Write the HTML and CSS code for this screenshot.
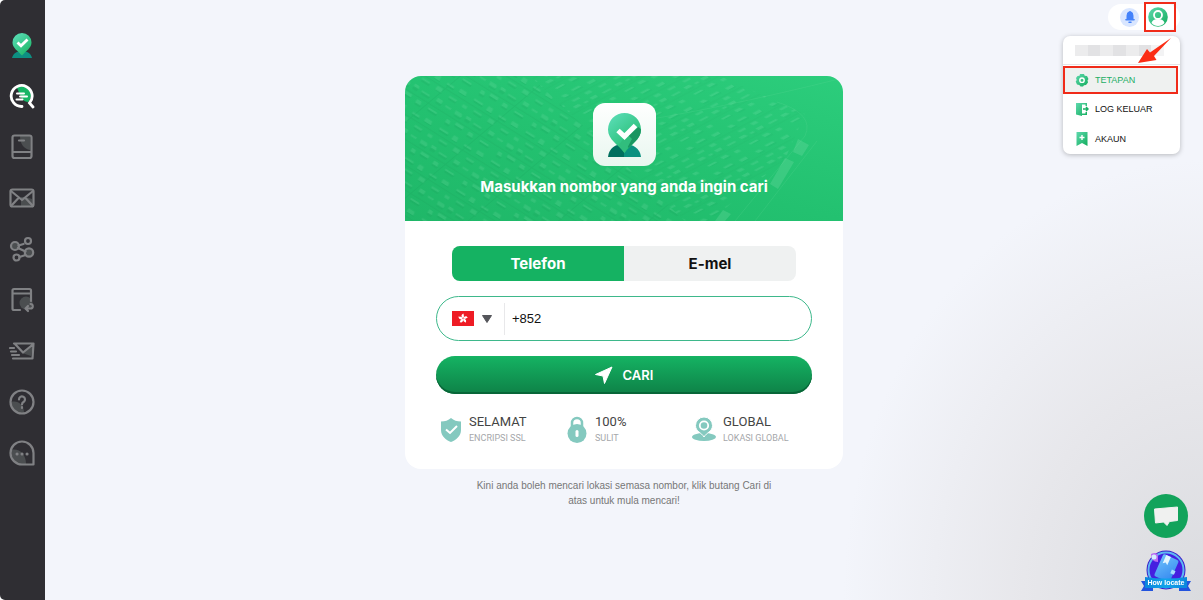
FILE: index.html
```html
<!DOCTYPE html>
<html lang="ms">
<head>
<meta charset="utf-8">
<meta name="viewport" content="width=device-width, initial-scale=1">
<title>Cari nombor</title>
<link rel="stylesheet" href="styles.css">
</head>
<body>
<svg class="defs" width="0" height="0" aria-hidden="true">
  <defs>
    <linearGradient id="pin" x1="0" y1="0" x2="0.7" y2="1"><stop offset="0" stop-color="#5fe0bc"/><stop offset="1" stop-color="#1fb86a"/></linearGradient>
    <linearGradient id="mint" x1="0" y1="0" x2="1" y2="1"><stop offset="0" stop-color="#5fd9ae"/><stop offset="1" stop-color="#12ad5c"/></linearGradient>
  </defs>
</svg>
<div class="app">
  <nav class="sidebar" aria-label="Menu utama">
    <a class="nav-item" href="#" aria-label="Laman utama"><svg width="26" height="28" viewBox="0 0 26 28"><path d="M3 27c1-4 4-7 10-7s9 3 10 7z" fill="#0d8f82"/><path d="M13 2a9.500 9.500 0 0 0-9.500 9.500C3.500 17 9 20 13 24.500c4-4.500 9.500-7.500 9.500-13A9.500 9.500 0 0 0 13 2z" fill="url(#pin)"/><path d="M8.500 11.500l3.500 3.300 6.500-6.300" fill="none" stroke="#fff" stroke-width="2.800"/></svg></a>
    <a class="nav-item" href="#" aria-label="Cari"><svg width="26" height="26" viewBox="0 0 26 26" fill="none" stroke="#fff" stroke-width="2.800" stroke-linecap="round"><path d="M8 5c6-4 14-1 14 6 0 4-1 6-3 8-2 0-4-1-6-3z" fill="#16b565" stroke="none"/><path d="M13 23.500A10.500 10.500 0 1 1 20.500 20l3.500 4"/><path stroke-width="2" d="M8 10.500h7M11 13.500h7M7.500 16.500h6"/></svg></a>
    <a class="nav-item" href="#" aria-label="Buku"><svg class="line" width="26" height="26" viewBox="0 0 26 26"><path class="shade" d="M11 2h10v14c-6-1-10-6-10-14z"/><rect x="3.500" y="1.500" width="19" height="22.500" rx="2"/><path d="M4 18h18M10 6.500h5"/></svg></a>
    <a class="nav-item" href="#" aria-label="Mesej"><svg class="line" width="26" height="26" viewBox="0 0 26 26"><path class="shade" d="M12 21V12h5l6 2v7z"/><rect x="1.500" y="4.500" width="23" height="17" rx="2"/><path d="M2 6l11 9L24 6M2 21l7.500-8M24 21l-7.500-8"/></svg></a>
    <a class="nav-item" href="#" aria-label="Kongsi"><svg class="line" width="26" height="26" viewBox="0 0 26 26"><circle class="shade" cx="6" cy="10" r="4"/><circle class="shade" cx="20" cy="17" r="4"/><circle cx="6" cy="10" r="4"/><circle cx="19" cy="5" r="3"/><circle cx="20" cy="16.500" r="4.200"/><circle cx="7.500" cy="21.500" r="3"/><path d="M9.500 9.500l5-1.500M9 12l7.500 3.500M10.500 21l6-2"/></svg></a>
    <a class="nav-item" href="#" aria-label="Sejarah"><svg class="line" width="26" height="26" viewBox="0 0 26 26"><circle class="shade" cx="17" cy="16" r="6.500"/><path d="M11 23H5q-1.500 0-1.500-1.500v-18Q3.500 2 5 2h15.500q1.500 0 1.500 1.500V14M4 6.500h17.500M17 21.500h4.500a2 2 0 0 0 0-4.500M19 19l-2.500 2.500L19 24"/></svg></a>
    <a class="nav-item" href="#" aria-label="Hantar"><svg class="line" width="26" height="26" viewBox="0 0 26 26"><path class="shade" d="M13 15l11-8-2 11z"/><path d="M5 5.500h19.500L23.500 20.500H4M6 6l8 8.500L24.500 6M1 10h4M2 13.500h5M3 17h7"/></svg></a>
    <a class="nav-item" href="#" aria-label="Bantuan"><svg class="line" width="26" height="26" viewBox="0 0 26 26"><path class="shade" d="M2 13c7-2 13 3 13 11C7 25 2 20 2 13z"/><circle cx="13" cy="13" r="11.500"/><path d="M10 10.500a3 3 0 1 1 4.800 2.300q-1.800 1-1.800 2.700M13 18v1"/></svg></a>
    <a class="nav-item" href="#" aria-label="Sembang"><svg class="line" width="26" height="26" viewBox="0 0 26 26"><path class="shade" d="M2 10c8-2 15 4 15 14-9 2-15-5-15-14z"/><path d="M13 24.500A11.500 11.500 0 1 1 24.500 13v11.500z"/><path class="dots" d="M8 14h.1M13 14h.1M18 14h.1"/></svg></a>
  </nav>

  <main class="main">
    <section class="card">
      <header class="hero">
        <svg class="city" viewBox="0 0 438 145" preserveAspectRatio="xMidYMid slice" aria-hidden="true">
          <defs>
            <pattern id="blocksA" width="61" height="43" patternUnits="userSpaceOnUse" patternTransform="rotate(32) skewX(-18)">
              <g fill="#a9ecc8" opacity=".13"><path d="M1 2h7l2 2v2H3z"/><path d="M13 1h5l2 3h-6z"/><path d="M23 3h9l1 2h-9z"/><path d="M40 1h6l1 4h-6z"/><path d="M51 3h7v2h-6z"/><path d="M2 14h4l2 4H3z"/><path d="M11 12h9l1 3h-9z"/><path d="M27 13h5l2 4h-6z"/><path d="M41 14h10l1 2H42z"/><path d="M4 25h10l1 2H5z"/><path d="M20 24h5l2 5h-6z"/><path d="M34 26h8l1 2h-8z"/><path d="M48 24h7l2 4h-8z"/><path d="M1 36h5l1 3H2zM13 35h9l1 2h-9zM30 34h6l2 4h-7zM46 36h9v2h-8z"/></g>
              <g fill="#0a8548" opacity=".13"><path d="M3 6h8v2H4zM14 4h6v3h-5zM24 5h10v2h-9zM41 5h7v2h-6zM3 18h6v2H4zM12 15h9v2h-8zM28 17h7v2h-6zM42 16h11v2H43zM5 27h11v2H6zM21 29h7v1h-6zM35 28h9v2h-8zM49 28h9v1h-8zM14 37h10v2H15zM31 38h8v1h-7zM47 38h9v2h-8z"/><path d="M0 10h61v1H0zM0 32h61v1H0zM37 0h1v43h-1z"/></g>
            </pattern>
            <pattern id="blocksB" width="47" height="35" patternUnits="userSpaceOnUse" patternTransform="rotate(-28) skewX(20)">
              <g fill="#a9ecc8" opacity=".14"><path d="M1 1h6l2 3H2z"/><path d="M12 2h4l1 2h-4z"/><path d="M20 1h7v3h-6z"/><path d="M33 2h9l1 2h-9z"/><path d="M3 11h9l1 2H4z"/><path d="M19 10h6l2 3h-7z"/><path d="M33 11h5l1 3h-5z"/><path d="M1 21h5l2 3H3zM13 20h9l1 2h-9zM30 21h8v3h-7zM5 30h8v2H6zM20 29h6l1 3h-6zM35 30h8v2h-7z"/></g>
              <g fill="#0a8548" opacity=".07"><path d="M2 4h7v2H3zM13 4h5v2h-4zM21 4h7v2h-6zM34 4h9v1h-8zM5 13h9v1H6zM20 13h8v2h-7zM2 24h7v2H3zM14 22h10v2H15zM31 24h8v1h-7z"/><path d="M0 7h47v1H0zM0 27h47v1H0z"/></g>
            </pattern>
          </defs>
          <path d="M0 0h125l155 145H0z" fill="url(#blocksA)"/>
          <path d="M125 0h190l85 38-20 45-75 62h-25z" fill="url(#blocksB)"/>
          <g fill="none" stroke="#7ce0aa" stroke-opacity=".14"><path d="M215 48Q310 34 438 2M330 145l70-85q10-22-28-34M350 145l62-80"/></g>
          <g fill="#8ee5b5" opacity=".22"><path d="M393 63l11 6-7 11-9-4zM380 82l9 4-16 27-8-5zM318 134l8 4-6 7h-10z"/></g>
        </svg>
        <div class="logo"><svg width="35" height="46" viewBox="0 0 35 46" aria-hidden="true"><path d="M1 45c1-9 7-13 16-13v13z" fill="#00705f"/><path d="M34 45c-1-9-8-13-17-13v13z" fill="#0a9180"/><path d="M17.500 1A16.500 16.500 0 0 0 1 17.500C1 28 11 32 17.500 41 24 32 34 28 34 17.500A16.500 16.500 0 0 0 17.500 1z" fill="url(#pin)"/><path d="M34 17.500C34 26 27 30 21.500 36l-4-9 14-12z" fill="#1a9661"/><path d="M20 22l5 5-7.500 14-6-7.500z" fill="#31bd7d"/><path d="M11 18.500l6.500 6 11-11" fill="none" stroke="#fff" stroke-width="5"/></svg></div>
        <h1>Masukkan nombor yang anda ingin cari</h1>
      </header>
      <form class="search">
        <div class="tabs" role="tablist">
          <button type="button" class="tab active" role="tab" aria-selected="true">Telefon</button>
          <button type="button" class="tab" role="tab" aria-selected="false">E-mel</button>
        </div>
        <div class="phone">
          <button type="button" class="country" aria-label="Pilih negara">
            <svg width="22" height="15" viewBox="0 0 22 15"><path d="M0 0h22v15H0z" fill="#ee1c25"/><g fill="#fff" transform="translate(11 7.500)"><path id="petal" d="M0-.3C-2.500-2-1.500-4.800.8-4.800 0-3.500 2.200-2.500 0-.3z"/><use href="#petal" transform="rotate(72)"/><use href="#petal" transform="rotate(144)"/><use href="#petal" transform="rotate(216)"/><use href="#petal" transform="rotate(288)"/></g></svg>
            <svg width="10" height="8" viewBox="0 0 10 8"><path d="M.5.500h9L5 7.500z" fill="#54555a" stroke="#54555a" stroke-linejoin="round"/></svg>
          </button>
          <input type="tel" value="+852" aria-label="Nombor telefon">
        </div>
        <button type="submit" class="submit"><svg width="18" height="18" viewBox="0 0 18 18" aria-hidden="true"><path d="M17 1L.5 8.500 8 10l1.500 7.500z" fill="#fff" stroke="#fff" stroke-linejoin="round"/></svg>CARI</button>
        <ul class="features">
          <li><svg width="22" height="26" viewBox="0 0 22 26"><path d="M11 1q4 3.500 10 3.500V13c0 6-5 10-10 12C6 23 1 19 1 13V4.500Q7 4.500 11 1z" fill="#84c9bf"/><path d="M6 12.500l4 3.500 7-7" fill="none" stroke="#fff" stroke-width="2"/></svg><div><strong>SELAMAT</strong><span>ENCRIPSI SSL</span></div></li>
          <li><svg width="22" height="28" viewBox="0 0 22 28"><path d="M6 12V7a5 5 0 0 1 10 0v5" fill="none" stroke="#84c9bf" stroke-width="2.500"/><circle cx="11" cy="17.500" r="9.500" fill="#84c9bf"/><path d="M11 15.500v4" stroke="#fff" stroke-width="3" stroke-linecap="round"/></svg><div><strong>100%</strong><span>SULIT</span></div></li>
          <li><svg width="24" height="26" viewBox="0 0 24 26"><ellipse cx="12" cy="20" rx="12" ry="4" fill="#84c9bf"/><path d="M12 0a8.500 8.500 0 0 0-8.500 8.500c0 6 6 7 8.500 11.500 2.500-4.500 8.500-5.500 8.500-11.500A8.500 8.500 0 0 0 12 0z" fill="#84c9bf" stroke="#fff"/><circle cx="12" cy="8.500" r="4.200" fill="#84c9bf" stroke="#fff" stroke-width="1.800"/></svg><div><strong>GLOBAL</strong><span>LOKASI GLOBAL</span></div></li>
        </ul>
      </form>
    </section>
    <p class="note">Kini anda boleh mencari lokasi semasa nombor, klik butang Cari di atas untuk mula mencari!</p>
  </main>
</div>

<div class="account">
  <div class="pill">
    <button type="button" class="bell" aria-label="Pemberitahuan"><svg width="12" height="14" viewBox="0 0 12 14"><path d="M6 1.500q3 .5 3 4v3L10.500 10h-9L3 8.500v-3Q3 2 6 1.500z" fill="#4382fb" stroke="#4382fb" stroke-linejoin="round"/><path d="M5 12.300h2" stroke="#4382fb" stroke-width="1.500" stroke-linecap="round"/></svg></button>
    <button type="button" class="avatar" aria-label="Akaun saya"><svg width="20" height="20" viewBox="0 0 20 20"><circle cx="10" cy="10" r="9.800" fill="url(#mint)"/><circle cx="10" cy="8" r="4" fill="none" stroke="#fff" stroke-width="1.800"/><path d="M3.500 16q1-4 6.500-4t6.500 4Q14 19 10 19t-6.500-3z" fill="#fff"/></svg></button>
  </div>
  <div class="menu">
    <div class="user"><i></i><i></i><i></i><i></i><i></i><i></i><i></i></div>
    <a class="entry current" href="#"><svg width="14" height="14" viewBox="0 0 14 14"><path d="M5 1h4l.7 1.800L12 3l1.500 3-1 1.200L13 9.500 11 12l-2 .2L8 13.500H5.500L4.300 12 2 11.500.7 8.500l1-1.500-.7-2L2.500 3l2-.2z" fill="url(#mint)"/><circle cx="7" cy="7.200" r="2.200" fill="none" stroke="#fff" stroke-width="1.400"/></svg>TETAPAN</a>
    <a class="entry" href="#"><svg width="14" height="14" viewBox="0 0 14 14"><path d="M1 1h11v3h-1.500V2.500H7v9h3.500V10H12v3H7v1L1 12.500z" fill="url(#mint)"/><path d="M8 7h5M11 5l2 2-2 2" fill="none" stroke="#16ae62" stroke-width="1.500"/></svg>LOG KELUAR</a>
    <a class="entry" href="#"><svg width="14" height="14" viewBox="0 0 14 14"><path d="M1.500 0h11v14L7 11l-5.500 3z" fill="url(#mint)"/><path d="M7 3v5M4.500 5.500h5" stroke="#fff" stroke-width="1.400"/></svg>AKAUN</a>
    <svg class="arrow" width="34" height="26" viewBox="0 0 34 26" aria-hidden="true"><path d="M33 0L16 18l2.500 4L0 25l9-14 3 3.500z" fill="#fb2c14"/></svg>
  </div>
</div>

<div class="floating">
  <button type="button" class="chat" aria-label="Sembang langsung"><svg width="26" height="22" viewBox="0 0 26 22"><path d="M1.500 4L24.500 2v13.500L16.500 16.500 14 20.500 10.500 17 2.500 18z" fill="#f0f1f0" stroke="#f0f1f0" stroke-linejoin="round"/></svg></button>
  <a class="badge" href="#"><svg width="50" height="42" viewBox="0 0 50 42" aria-hidden="true"><defs><linearGradient id="ribbon"><stop offset="0" stop-color="#0b86dc"/><stop offset=".5" stop-color="#12a4ea"/><stop offset="1" stop-color="#0b86dc"/></linearGradient><linearGradient id="book" x2="1" y2="1"><stop offset="0" stop-color="#6cc0fb"/><stop offset="1" stop-color="#3487f0"/></linearGradient></defs><path d="M0 31h12v10H0l3-5zM50 31H38v10h12l-3-5z" fill="#2253de"/><circle cx="25" cy="20" r="19.500" fill="#3a1cc8"/><circle cx="25" cy="20" r="17.500" fill="#451fe0" stroke="#5db9f3" stroke-width="2"/><g transform="rotate(24 25 18)"><rect x="17" y="6" width="17" height="24" rx="2" fill="url(#book)"/><path d="M20 6v9l2.500-2 2.500 2V6z" fill="#e3f5ff"/><path d="M31 17h4v4h-4z" fill="#a7dcff"/></g><path d="M10 4q6-3 7 2v6q-7 0-7-8z" fill="#b96af2"/><circle cx="13" cy="7" r="2.500" fill="#d5efff"/><path d="M4 27q21 3 42 0v11H4z" fill="url(#ribbon)"/></svg><span>How locate</span></a>
</div>
</body>
</html>
```
FILE: styles.css
```css
* { box-sizing: border-box; }

body {
  margin: 0;
  font-family: "Liberation Sans", Arial, sans-serif;
  color: #111;
  background: #fff;
}

button, input { font: inherit; border: 0; padding: 0; background: none; color: inherit; }
button { cursor: pointer; }
a { color: inherit; text-decoration: none; }
svg { display: block; flex: none; }
.defs { position: absolute; }

.app { display: flex; min-height: 100vh; }

.sidebar {
  width: 45px;
  flex: none;
  padding-top: 19px;
  background: #2f2e33;
  border-radius: 5px 0 0 5px;
}

.nav-item {
  height: 51px;
  display: flex;
  align-items: center;
  padding-left: 9px;
}

.line { fill: none; stroke: #808184; stroke-width: 2.2; stroke-linecap: round; stroke-linejoin: round; }
.line .shade { fill: #4b4e50; stroke: none; }
.line .dots { stroke-width: 3; }

.main {
  flex: 1;
  display: flex;
  flex-direction: column;
  align-items: center;
  padding: 76px 16px 24px;
  background: radial-gradient(ellipse 360px 440px at 100% 100%, #dadbdf 0%, #e7e7eb 50%, #f3f5fb 100%) #f3f5fb;
}

.card {
  width: 100%;
  max-width: 438px;
  border-radius: 16px;
  overflow: hidden;
  background: #fff;
}

.hero {
  position: relative;
  display: flex;
  flex-direction: column;
  align-items: center;
  gap: 11px;
  padding: 27px 16px 24px;
  background: linear-gradient(15deg, #1fb768 0%, #23c170 45%, #2ccd7c 100%);
}

.city { position: absolute; inset: 0; width: 100%; height: 100%; }

.logo {
  position: relative;
  width: 63px;
  height: 63px;
  display: grid;
  place-items: center;
  border-radius: 12px;
  background: linear-gradient(#fff, #e8f7ef);
}

h1 {
  position: relative;
  margin: 0;
  font-family: Inter, sans-serif;
  font-size: 15px;
  font-weight: 700;
  line-height: 20px;
  color: #fff;
  text-align: center;
}

.search { padding: 25px 31px 23px; }

.tabs {
  display: flex;
  margin: 0 16px 15px;
  border-radius: 8px;
  overflow: hidden;
  background: #eff1f1;
}

.tab { flex: 1; height: 35px; font-family: Inter, sans-serif; font-size: 15px; font-weight: 700; }
.tab.active { background: #15b262; color: #fff; }

.phone {
  display: flex;
  align-items: center;
  height: 45px;
  border: 1px solid #3eb88b;
  border-radius: 23px;
}

.country {
  display: flex;
  align-items: center;
  gap: 8px;
  height: 32px;
  padding: 0 12px 0 15px;
  border-right: 1px solid #e8e8ea;
}

.phone input {
  flex: 1;
  min-width: 0;
  height: 32px;
  margin: 0 16px 0 7px;
  font-size: 13px;
  outline: 0;
}

.submit {
  display: flex;
  align-items: center;
  justify-content: center;
  gap: 10px;
  width: 100%;
  height: 38px;
  margin-top: 15px;
  padding-bottom: 1px;
  border-radius: 19px;
  background: linear-gradient(#15b363, #0e8147);
  box-shadow: inset 0 -2px #086638;
  color: #fff;
  font-family: Inter, sans-serif;
  font-size: 13px;
  font-weight: 600;
}

.features {
  display: grid;
  grid-template-columns: repeat(3, 1fr);
  margin: 20px -6px 0 0;
  padding: 0 0 0 4px;
  list-style: none;
  font-family: Roboto, sans-serif;
}

.features li { display: flex; align-items: center; gap: 7px; white-space: nowrap; }
.features strong, .features span { display: block; }
.features strong { font-size: 13px; font-weight: 400; line-height: 16px; color: #444; }
.features span { font-size: 9px; line-height: 16px; color: #a5a7aa; }

.note {
  max-width: 310px;
  margin: 9px 0 0;
  font-size: 10px;
  line-height: 15px;
  text-align: center;
  color: #777;
}

.account {
  position: absolute;
  top: 4px;
  right: 23px;
  display: flex;
  flex-direction: column;
  align-items: flex-end;
  gap: 6px;
}

.pill {
  display: flex;
  align-items: center;
  gap: 9px;
  height: 26px;
  padding: 0 12px;
  border-radius: 13px;
  background: #fff;
}

.bell { width: 19px; height: 19px; display: grid; place-items: center; border-radius: 50%; background: #d9e6ff; }
.avatar { position: relative; width: 20px; height: 20px; }
.avatar::after { content: ""; position: absolute; inset: -5px -8px -5px -4px; border: 2px solid #f02b19; }

.menu {
  position: relative;
  width: 117px;
  border-radius: 7px;
  background: #fff;
  box-shadow: 0 1px 5px rgba(0, 0, 0, .25);
}

.user {
  display: flex;
  align-items: center;
  height: 29px;
  padding: 0 16px 0 12px;
  border-bottom: 1px solid #e5e5e7;
}

.user i { flex: 1; height: 11px; background: #ececed; }
.user i:nth-child(even) { background: #e2e2e4; }
.user i:last-child { background: #f3f3f4; }

.entry {
  display: flex;
  align-items: center;
  gap: 6px;
  height: 30px;
  padding-left: 12px;
  font-size: 9px;
}

.entry.current {
  height: 28px;
  margin: 1px 2px 0 0;
  padding-left: 10px;
  border: 2px solid #f02b19;
  background: #eff1f0;
  color: #22ae65;
}

.arrow { position: absolute; top: 2px; right: 8px; }

.floating {
  position: fixed;
  right: 12px;
  bottom: 8px;
  display: flex;
  flex-direction: column;
  align-items: center;
  gap: 12px;
}

.chat { width: 44px; height: 44px; display: grid; place-items: center; border-radius: 50%; background: #12a35b; }
.badge { position: relative; display: block; }
.badge span {
  position: absolute;
  inset: auto 0 4px;
  text-align: center;
  color: #fff;
  font-size: 7px;
  font-weight: 700;
  line-height: 10px;
}
```
